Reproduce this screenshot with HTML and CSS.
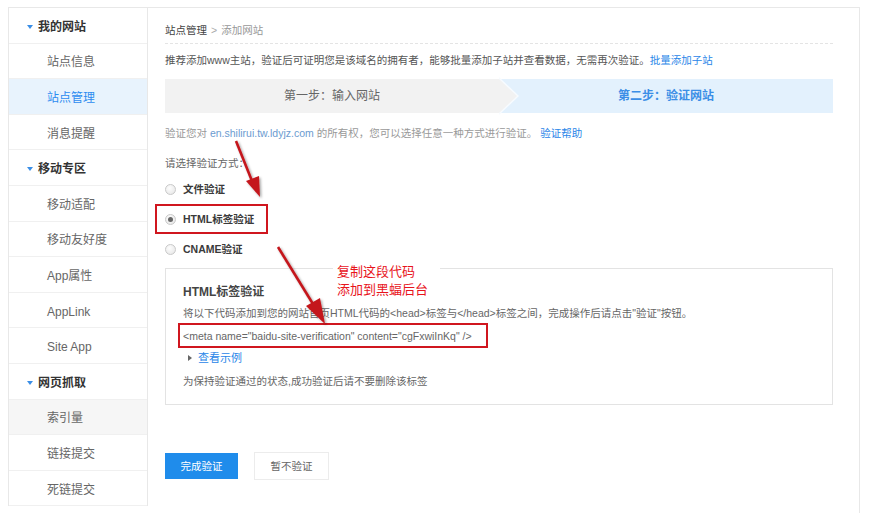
FILE: index.html
```html
<!DOCTYPE html>
<html lang="zh-CN">
<head>
<meta charset="utf-8">
<title>添加网站</title>
<link rel="stylesheet" href="styles.css">
</head>
<body>
<div class="page">
  <aside class="sidebar">
    <div class="row head"><span class="tri"></span>我的网站</div>
    <div class="row item">站点信息</div>
    <div class="row item active">站点管理</div>
    <div class="row item">消息提醒</div>
    <div class="row head"><span class="tri"></span>移动专区</div>
    <div class="row item">移动适配</div>
    <div class="row item">移动友好度</div>
    <div class="row item">App属性</div>
    <div class="row item">AppLink</div>
    <div class="row item">Site App</div>
    <div class="row head"><span class="tri"></span>网页抓取</div>
    <div class="row item hover">索引量</div>
    <div class="row item">链接提交</div>
    <div class="row item">死链提交</div>
  </aside>
  <main class="main">
    <div class="crumb"><span class="crumb-a">站点管理</span><span class="crumb-sep">&gt;</span><span class="crumb-b">添加网站</span></div>
    <p class="info">推荐添加www主站，验证后可证明您是该域名的拥有者，能够批量添加子站并查看数据，无需再次验证。<a class="link">批量添加子站</a></p>
    <div class="steps">
      <div class="step step-one">第一步：输入网站</div>
      <div class="step step-two">第二步：验证网站</div>
    </div>
    <p class="verify">验证您对 <span class="domain">en.shilirui.tw.ldyjz.com</span> 的所有权，您可以选择任意一种方式进行验证。 <a class="link">验证帮助</a></p>
    <p class="choose">请选择验证方式：</p>
    <div class="options">
      <div class="opt"><span class="radio"></span>文件验证</div>
      <div class="opt marked"><span class="radio checked"></span>HTML标签验证</div>
      <div class="opt"><span class="radio"></span>CNAME验证</div>
    </div>
    <div class="card">
      <div class="note">复制这段代码<br>添加到黑蝠后台</div>
      <h3 class="card-title">HTML标签验证</h3>
      <p class="desc">将以下代码添加到您的网站首页HTML代码的&lt;head&gt;标签与&lt;/head&gt;标签之间，完成操作后请点击"验证"按钮。</p>
      <div class="code">&lt;meta name="baidu-site-verification" content="cgFxwiInKq" /&gt;</div>
      <div class="example"><span class="tri-r"></span><a class="link">查看示例</a></div>
      <p class="keep">为保持验证通过的状态,成功验证后请不要删除该标签</p>
    </div>
    <div class="buttons">
      <span class="btn btn-primary">完成验证</span>
      <span class="btn btn-default">暂不验证</span>
    </div>
  </main>
</div>
<svg class="arrows" width="873" height="513" viewBox="0 0 873 513">
  <defs>
    <filter id="sh" x="-50%" y="-50%" width="200%" height="200%">
      <feDropShadow dx="1.5" dy="1.5" stdDeviation="1.2" flood-color="#000" flood-opacity="0.35"/>
    </filter>
  </defs>
  <g filter="url(#sh)" fill="#c4161c" stroke="#c4161c">
    <line x1="236" y1="141" x2="252" y2="181" stroke-width="2.6"/>
    <polygon points="260,197 246,181 259,176" stroke="none"/>
    <line x1="278" y1="247" x2="313" y2="304" stroke-width="2.6"/>
    <polygon points="325,324 306,306 320,298" stroke="none"/>
  </g>
</svg>
</body>
</html>
```

FILE: styles.css
```css
html, body {
  margin: 0;
  padding: 0;
  background: #fff;
  overflow: hidden;
}
body {
  font-family: "Liberation Sans", "Noto Sans CJK SC", sans-serif;
  width: 873px;
  height: 513px;
  position: relative;
}
.page {
  display: flex;
  padding: 7px 0 0 8px;
  align-items: flex-start;
}
.sidebar {
  width: 140px;
  box-sizing: border-box;
  border: 1px solid #e8e8e8;
  border-bottom: none;
  flex: none;
}
.row {
  height: 35.6px;
  box-sizing: border-box;
  padding-top: 3px;
  border-bottom: 1px solid #f0f0f0;
  display: flex;
  align-items: center;
  font-size: 12px;
  line-height: 16px;
}
.head {
  padding-left: 18px;
  color: #333;
  font-weight: bold;
}
.tri {
  width: 0;
  height: 0;
  border-left: 3px solid transparent;
  border-right: 3px solid transparent;
  border-top: 4px solid #3a8ee6;
  margin-right: 5px;
}
.item {
  padding-left: 38px;
  color: #666;
}
.item.active {
  background: #e8f3fd;
  color: #2d8cf0;
}
.item.hover {
  background: #f6f6f6;
}
.main {
  width: 712px;
  min-height: 506px;
  box-sizing: border-box;
  border-top: 1px solid #e8e8e8;
  border-right: 1px solid #e8e8e8;
  padding: 0 26px 0 17px;
  font-size: 10.5px;
  line-height: 16px;
  color: #555;
}
.crumb {
  padding-top: 14px;
  padding-bottom: 5px;
  line-height: 16px;
  border-bottom: 1px dashed #e4e4e4;
}
.crumb-a { color: #444; }
.crumb-sep { color: #aaa; margin: 0 4px; }
.crumb-b { color: #999; }
.info {
  margin: 8px 0 0;
  color: #555;
}
.link {
  color: #2a86e8;
  text-decoration: none;
}
.steps {
  display: flex;
  height: 34px;
  margin-top: 11px;
}
.step {
  flex: 1;
  display: flex;
  align-items: center;
  justify-content: center;
  font-size: 12px;
}
.step-one {
  background: #f2f2f2;
  color: #666;
  position: relative;
  z-index: 1;
}
.step-one::before {
  content: "";
  position: absolute;
  top: -2px;
  right: -20px;
  border-top: 19px solid transparent;
  border-bottom: 19px solid transparent;
  border-left: 20px solid #f7fbff;
}
.step-one::after {
  content: "";
  position: absolute;
  top: 0;
  right: -18px;
  border-top: 17px solid transparent;
  border-bottom: 17px solid transparent;
  border-left: 18px solid #f2f2f2;
}
.step-two {
  background: #e3f1fd;
  color: #3b8ee6;
  font-weight: bold;
}
.verify {
  margin: 12px 0 0;
  color: #999;
}
.domain {
  color: #6b9bd0;
}
.choose {
  margin: 14px 0 0;
  color: #666;
}
.options {
  margin-top: 3px;
}
.opt {
  height: 30px;
  display: flex;
  align-items: center;
  font-weight: bold;
  color: #3a3a3a;
  position: relative;
}
.opt.marked::after {
  content: "";
  position: absolute;
  left: -10px;
  top: 0;
  width: 113px;
  height: 30px;
  box-sizing: border-box;
  border: 2px solid #d0161f;
}
.radio {
  width: 11px;
  height: 11px;
  box-sizing: border-box;
  border: 1px solid #c9c9c9;
  border-radius: 50%;
  background: radial-gradient(circle at 40% 35%, #fdfdfd, #e4e4e4);
  margin-right: 7px;
  display: flex;
  align-items: center;
  justify-content: center;
}
.radio.checked::after {
  content: "";
  width: 5px;
  height: 5px;
  border-radius: 50%;
  background: #666;
}
.card {
  margin-top: 4px;
  border: 1px solid #e3e3e3;
  padding: 13px 17px 14px;
  position: relative;
}
.note {
  position: absolute;
  left: 167px;
  top: -7px;
  width: 107px;
  padding: 1px 0 2px 4px;
  box-sizing: border-box;
  background: #fff;
  color: #e8141c;
  font-size: 13px;
  line-height: 18px;
}
.card-title {
  margin: 0;
  font-size: 12px;
  line-height: 20px;
  color: #444;
  font-weight: bold;
}
.desc {
  margin: 2px 0 0;
  line-height: 18px;
  color: #666;
}
.code {
  margin: 1px 0 0 -5px;
  width: 310px;
  height: 25px;
  box-sizing: border-box;
  border: 2px solid #d0161f;
  padding-left: 3px;
  display: flex;
  align-items: center;
  color: #666;
}
.example {
  display: flex;
  align-items: center;
  height: 18px;
  margin-top: 1px;
}
.tri-r {
  width: 0;
  height: 0;
  border-top: 3px solid transparent;
  border-bottom: 3px solid transparent;
  border-left: 4px solid #666;
  margin: 0 6px 0 5px;
}
.example .link {
  font-size: 11px;
}
.keep {
  margin: 5px 0 0;
  line-height: 18px;
  color: #666;
}
.buttons {
  display: flex;
  align-items: center;
  margin-top: 47px;
}
.btn {
  display: flex;
  align-items: center;
  justify-content: center;
  box-sizing: border-box;
  font-size: 10.5px;
}
.btn-primary {
  width: 73px;
  height: 26px;
  background: #1f8ceb;
  color: #fff;
}
.btn-default {
  width: 75px;
  height: 28px;
  margin-left: 16px;
  border: 1px solid #ececec;
  background: #fff;
  color: #666;
}
.arrows {
  position: absolute;
  left: 0;
  top: 0;
  pointer-events: none;
}
```
